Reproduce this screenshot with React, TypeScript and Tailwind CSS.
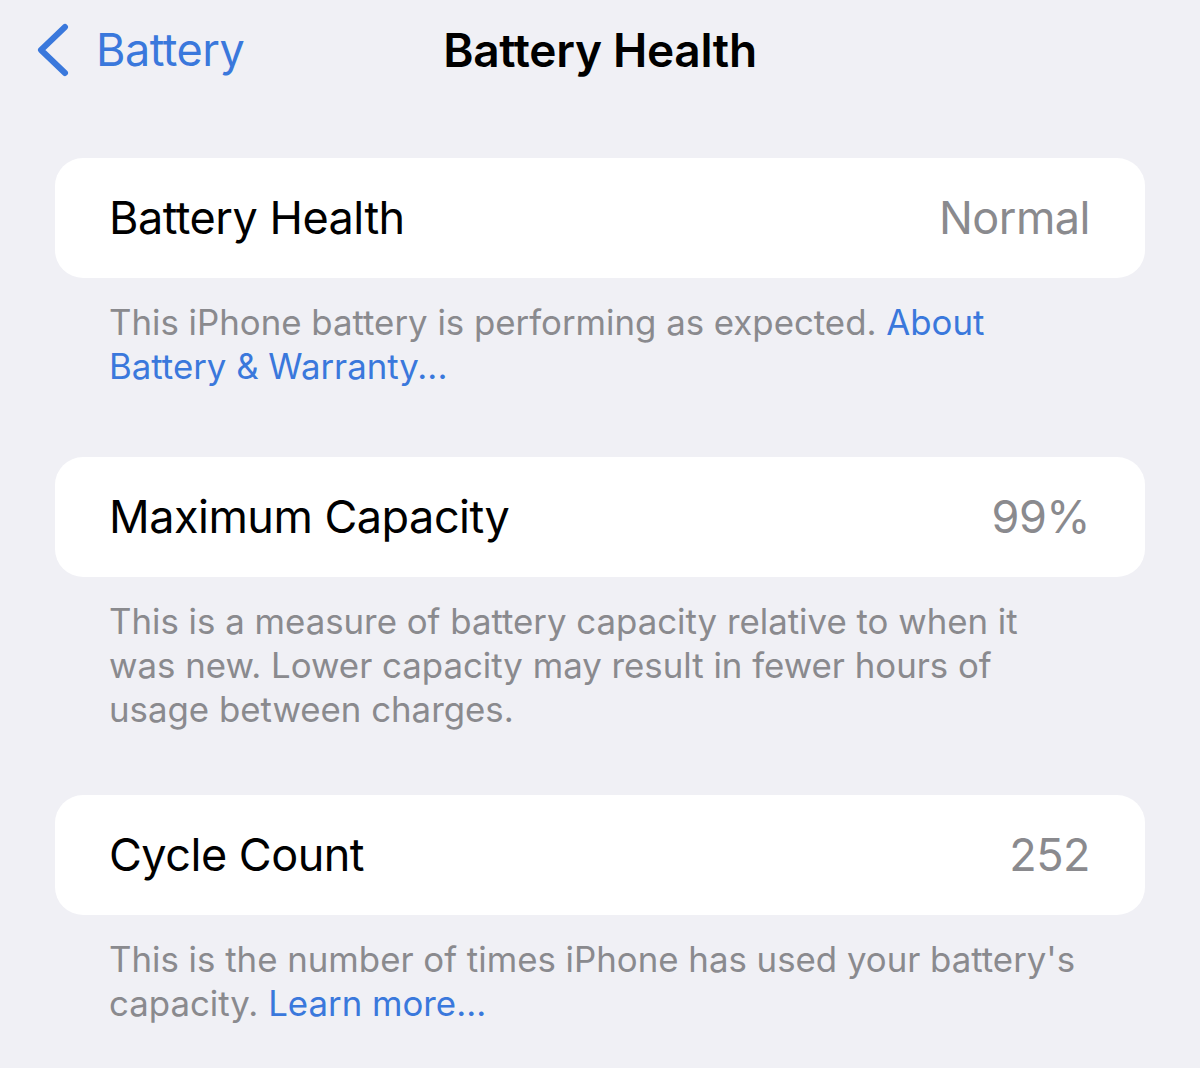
import { ReactNode } from 'react';

function Row({ label, value }: { label: string; value: string }) {
  return (
    <div className="mx-[55px] flex h-[120px] items-center justify-between rounded-[28px] bg-white pl-[54px] pr-[55px]">
      <span className="text-[45px] tracking-[-0.5px] text-black">{label}</span>
      <span className="text-[45px] tracking-[-0.5px] text-[#8a8a8e]">{value}</span>
    </div>
  );
}

function Footer({ children }: { children: ReactNode }) {
  return (
    <p className="mx-[55px] pl-[54px] pr-[62px] pt-[22px] text-[34.8px] leading-[44px] text-[#8a8a8e]">
      {children}
    </p>
  );
}

export default function App() {
  return (
    <div
      className="h-[1068px] w-[1200px] overflow-hidden bg-[#f0f0f5]"
      style={{ fontFamily: 'Inter, "Noto Sans", sans-serif' }}
    >
      <div className="relative flex h-[100px] items-center justify-center">
        <div className="absolute left-[34px] top-[16px] flex items-center gap-[26px] text-[#3a78dc]">
          <svg width="36" height="54" viewBox="0 0 36 54" fill="none">
            <path d="M31 4 L7 27 L31 50" stroke="currentColor" strokeWidth="6" strokeLinecap="round" strokeLinejoin="round" />
          </svg>
          <span className="text-[45px] tracking-[-0.5px]">Battery</span>
        </div>
        <h1 className="text-[46px] font-semibold tracking-[-0.3px] text-black">Battery Health</h1>
      </div>

      <div className="pt-[58px]">
        <Row label="Battery Health" value="Normal" />
        <Footer>
          This iPhone battery is performing as expected.{' '}
          <span className="text-[#3a78dc]">About Battery &amp; Warranty...</span>
        </Footer>

        <div className="pt-[69px]">
          <Row label="Maximum Capacity" value="99%" />
        </div>
        <Footer>
          This is a measure of battery capacity relative to when it was new. Lower capacity may result in fewer hours of usage between charges.
        </Footer>

        <div className="pt-[64px]">
          <Row label="Cycle Count" value="252" />
        </div>
        <Footer>
          This is the number of times iPhone has used your battery's capacity.{' '}
          <span className="text-[#3a78dc]">Learn more...</span>
        </Footer>
      </div>
    </div>
  );
}
